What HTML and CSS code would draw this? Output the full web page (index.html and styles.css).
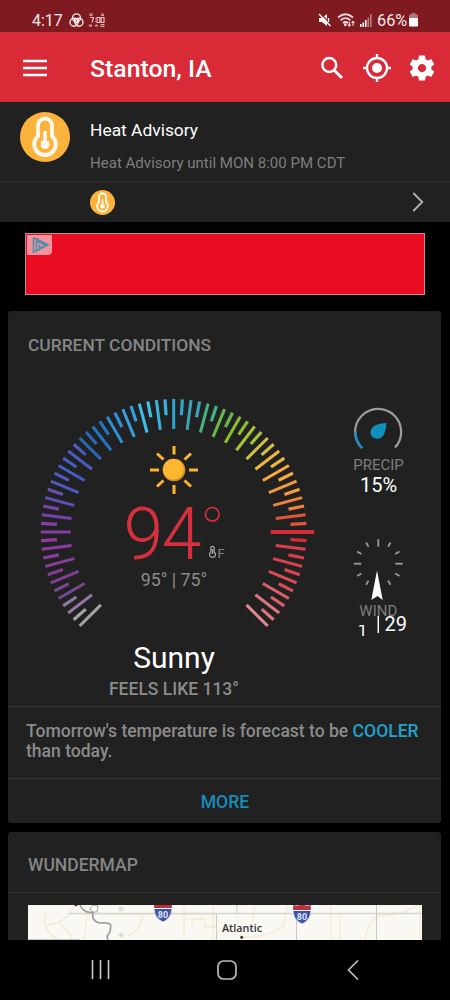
FILE: index.html
```html
<!DOCTYPE html>
<html lang="en">
<head>
<meta charset="utf-8">
<title>Stanton, IA</title>
<link rel="stylesheet" href="styles.css">
</head>
<body>
<div class="status">
  <span class="clock">4:17</span>
  <svg class="rings" width="15" height="15" viewBox="0 0 15 15" fill="none" stroke="#fbe9ea" stroke-width="1.4"><circle cx="7.5" cy="4.9" r="4"/><circle cx="5" cy="9.3" r="4"/><circle cx="10" cy="9.3" r="4"/><circle cx="7.5" cy="7.8" r="2"/></svg>
  <svg class="alarm" width="18" height="15" viewBox="0 0 18 15" fill="none" stroke="#efc9cc" stroke-width="1.1"><path d="M1 1h4M1.500 2.500h3M13 1h3M13 2.500h3" stroke-width=".8"/><path d="M2 4.500h3.500L4 9.500M7 6h.8M7 8.500h.8M9 4.500h2.800v5H9zM13.200 4.500H16v5h-2.800z"/><path d="M1 12h3l-1.500 2zM7 13q1.500-3 3 0zM13 11.500h3v2h-3z" stroke-width=".8"/></svg>
  <span class="grow"></span>
  <svg class="mute" width="14" height="14" viewBox="0 0 14 14"><path d="M1 5h3l5-4v12L4 9H1z" fill="#fff"/><path d="M2 0l12 12" stroke="#801a21" stroke-width="1.200"/><path d="M1 1l11.500 12M10.500 5v4" stroke="#fff" stroke-width="1.300"/></svg>
  <svg class="wifi" width="19" height="15" viewBox="0 0 19 15" fill="none" stroke="#f3d8da" stroke-width="1.700"><path d="M1 4.500Q8.500-2 16 4.500M3.500 7.300Q8.500 3 13.500 7.300M6 10q2.500-2 5 0"/><circle cx="8.300" cy="11.700" r=".6" fill="#fff"/><path d="M12.300 8.500v4.500m-1.500-1.500l1.500 1.700 1.500-1.700M16 13V8.500m-1.500 1.500L16 8.300l1.500 1.700" stroke-width="1.100"/></svg>
  <svg class="signal" width="12" height="13" viewBox="0 0 12 13"><path d="M0 10h1.600v3H0zM2.500 8.500h1.600V13H2.500zM5 6h1.600v7H5z" fill="#fff"/><path d="M7.500 3.500h1.600V13H7.500zM10 0h1.600v13H10z" fill="#b87f83"/></svg>
  <span class="pct">66%</span>
  <svg class="batt" width="9" height="14" viewBox="0 0 9 14"><path d="M2.500 0h4v1.500H8Q9 1.500 9 2.500V6H0V2.500Q0 1.500 1 1.500h1.500z" fill="#b0777b"/><path d="M0 5h9v7.500Q9 13.500 8 13.500H1Q0 13.500 0 12.500z" fill="#fff"/></svg>
</div>
<header class="bar">
  <svg width="24" height="18" viewBox="0 0 24 18"><path d="M0 2h24M0 9h24M0 16h24" stroke="#fff" stroke-width="2.500"/></svg>
  <h1>Stanton, IA</h1>
  <svg class="search" width="24" height="24" viewBox="0 0 24 24" fill="none" stroke="#fff"><circle cx="9.300" cy="9" r="6.900" stroke-width="2.500"/><path d="M14 14l8 8" stroke-width="3"/></svg>
  <svg class="target" width="28" height="28" viewBox="0 0 28 28" fill="none" stroke="#fff" stroke-width="2.300"><circle cx="14" cy="14" r="10"/><path d="M14 0v4M14 24v4M0 14h4M24 14h4"/><circle cx="14" cy="14" r="5" fill="#fff" stroke="none"/></svg>
  <svg class="gear" width="30" height="30" viewBox="0 0 24 24" fill="#fff"><path d="M19.430 12.980c.04-.32.07-.64.07-.98s-.03-.66-.07-.98l2.110-1.650c.19-.15.24-.42.12-.64l-2-3.460c-.12-.22-.39-.3-.61-.22l-2.490 1c-.52-.4-1.080-.73-1.690-.98l-.38-2.650C14.460 2.180 14.250 2 14 2h-4c-.25 0-.46.18-.49.42l-.38 2.650c-.61.25-1.170.59-1.690.98l-2.490-1c-.23-.09-.49 0-.61.22l-2 3.460c-.13.22-.07.49.12.64l2.110 1.650c-.04.32-.07.65-.07.98s.03.66.07.98l-2.110 1.650c-.19.15-.24.42-.12.64l2 3.460c.12.22.39.3.61.22l2.490-1c.52.4 1.080.73 1.690.98l.38 2.650c.03.24.24.42.49.42h4c.25 0 .46-.18.49-.42l.38-2.650c.61-.25 1.170-.59 1.690-.98l2.490 1c.23.09.49 0 .61-.22l2-3.460c.12-.22.07-.49-.12-.64l-2.110-1.650zM12 15.300c-1.820 0-3.300-1.480-3.300-3.300s1.480-3.300 3.300-3.300 3.300 1.480 3.300 3.300-1.480 3.300-3.300 3.300z"/></svg>
</header>
<section class="alert">
  <svg width="50" height="50" viewBox="0 0 50 50"><use href="#heat"/></svg>
  <div><p class="alert-title">Heat Advisory</p><p class="alert-sub">Heat Advisory until MON 8:00 PM CDT</p></div>
</section>
<section class="alert-more">
  <svg width="25" height="25" viewBox="0 0 50 50"><g id="heat"><circle cx="25" cy="25" r="25" fill="#fdb33b"/><path d="M18 24V13.500a7 7 0 0 1 14 0V24a10.800 10.800 0 1 1-14 0z" fill="none" stroke="#fff8ee" stroke-width="3.800"/><path d="M25 19v13" stroke="#fff8ee" stroke-width="3.600"/><circle cx="25" cy="32.500" r="4.500" fill="#fff8ee"/></g></svg>
  <svg width="12" height="20" viewBox="0 0 12 20"><path d="M1.300 1l9 9-9 9" fill="none" stroke="#b2b2b2" stroke-width="1.800"/></svg>
</section>
<div class="ad"><svg width="25" height="20" viewBox="0 0 25 20"><path d="M0 0h25v16q0 4-4 4H0z" fill="#f592a0"/><path d="M6.500 2.500v14.500l3-1.300V6l9.500 4-6.500 3.200V9M6.500 2.500L21 9.800l-11.500 6" fill="none" stroke="#4c8eab" stroke-width="1.600"/></svg></div>
<section class="card">
  <h2>CURRENT CONDITIONS</h2>
  <svg class="cond" width="433" height="337" viewBox="8 369 433 337">
    <g id="ticks"></g>
    <g stroke="#fcb52f" stroke-width="3"><path d="M174 446v8.500M174 485v9M150 470h9M189 470h9M157 453.500l6.500 6M184.500 480.500l6.500 6M157 486.500l6.500-6M184.500 459.500l6.500-6"/></g>
    <circle cx="174" cy="470" r="11.300" fill="#d98f24"/><circle cx="173.300" cy="469.300" r="10.500" fill="#fdb62f"/>
    <text class="temp" x="123.500" y="559.300">94</text>
    <circle cx="212.300" cy="514.300" r="6.800" fill="none" stroke="#d6303e" stroke-width="1.700"/>
    <path d="M210.800 552v-4a1.700 1.700 0 0 1 3.400 0v4a3 3 0 1 1-3.400 0z" fill="none" stroke="#aaa" stroke-width="1.200"/><path d="M212.500 549v5" stroke="#aaa" stroke-width="1.400"/>
    <text class="unit" x="217.500" y="557.500">F</text>
    <text class="hilo" x="174" y="585.600">95° | 75°</text>
    <text class="sky" x="174" y="668">Sunny</text>
    <text class="feels" x="174" y="694.700">FEELS LIKE 113°</text>
    <g fill="none" stroke-width="2.300"><path d="M361.800 448A23 23 0 1 1 395 447.500" stroke="#9b9b9b"/><path d="M355.500 431.500A23 23 0 0 0 362.300 448" stroke="#118fbd"/></g>
    <path d="M386.600 423c-7 .5-12.500 1.500-15 5.500-3 5 .5 10 5.500 10.300 7 0 8.500-7.500 9.500-15.800z" fill="#1190c0"/>
    <text class="label" x="378.500" y="470">PRECIP</text>
    <text class="value" x="378.500" y="492">15%</text>
    <g id="compass"></g>
    <path d="M377 570.500l5.700 29.500-5.200-4-6.200 4z" fill="#fff"/>
    <text class="label" x="378.300" y="616.300">WIND</text>
    <clipPath id="clip"><path d="M350 625h25v15h-25z"/></clipPath>
    <text class="value small" x="362.500" y="636" clip-path="url(#clip)">1</text>
    <path d="M378.300 616v17" stroke="#fff" stroke-width="1.500"/>
    <text class="value" x="395.700" y="631">29</text>
  </svg>
  <p class="forecast">Tomorrow's temperature is forecast to be <b>COOLER</b> than today.</p>
  <div class="more">MORE</div>
</section>
<section class="card map-card">
  <h2>WUNDERMAP</h2>
  <svg class="map" width="394" height="35" viewBox="28 905 394 35">
    <path d="M28 905h394v35H28z" fill="#faf8f3"/>
    <g fill="none" stroke="#f4e9d3" stroke-width="1.300"><path d="M85 905v9h129M87 914l-3 26M75 905q-8 18-29 20M46 912q-7 16 13 28M58 922q10 8 15 18M143 914q-1 14-15 22M184 905v35M192 926v-7h13v8h12M213 905v35M255 905q-4 18-1 18M244 937q20 2 40-11l3-21M331 905v35M340 913v27M365 940q3-20 14-25 20 2 38-10M420 905v35"/></g>
    <g fill="none" stroke="#c9c9c8"><path d="M68 913.500h354" stroke="#d7d6cf" stroke-width="1.700"/><path d="M237 905v8M236.500 913v1M216.500 914v26M296.500 916v24M376.500 905v35M28 939.500h52"/></g>
    <path d="M80 905q4 9 13 7l3-7m-3 7q-2 9 7 11c11-1 13 1 9 11q-3 1-1 6" fill="none" stroke="#9c9ea3" stroke-width="1.700"/>
    <path d="M93 912l-3-3 3-4 5 1-1 6z" fill="#faf8f3" stroke="#a9abb0"/><path d="M74 905h4l-2 1.500z" fill="#333"/>
    <g fill="#e1dfda"><circle cx="121" cy="909" r="2.500"/><circle cx="121" cy="935" r="2.500"/></g>
    <g id="shield"><path d="M154.500 903q4 2 8.500-1 4.500 3 8.500 1 2.500 14-8.500 19-11-5-8.500-19z" fill="#3d52a4" stroke="#fff" stroke-width=".6"/><path d="M154.500 903q4 2 8.500-1 4.500 3 8.500 1l.4 5h-17.800z" fill="#bd3041"/><path d="M154 908.500h18" stroke="#fff"/><text class="route" x="163" y="918.300">80</text></g>
    <use href="#shield" x="139" y="2"/>
    <text class="town" x="242" y="932">Atlantic</text><circle cx="241.700" cy="937.300" r="1.500" fill="#333"/>
  </svg>
</section>
<nav class="nav">
  <svg width="20" height="20" viewBox="0 0 20 20"><path d="M1.500 0v19M9.500 0v19M17.500 0v19" stroke="#bdbdbd" stroke-width="1.700"/></svg>
  <svg class="home" width="20" height="20" viewBox="0 0 20 20"><rect x="1" y="1" width="18" height="18" rx="5.500" fill="none" stroke="#bdbdbd" stroke-width="1.700"/></svg>
  <svg width="12" height="20" viewBox="0 0 12 20"><path d="M11 .5L1.500 10l9.500 9.500" fill="none" stroke="#bdbdbd" stroke-width="1.700"/></svg>
</nav>
<script src="gauge.js"></script>
</body>
</html>
```

FILE: styles.css
```css
* { box-sizing: border-box; }
body { margin: 0; width: 450px; height: 1000px; overflow: hidden; background: #000; color: #fff; font-family: Roboto, "Liberation Sans", sans-serif; display: flex; flex-direction: column; }
svg { display: block; flex: none; }
h1, h2, p { margin: 0; }
.status { height: 32px; flex: none; background: #801a21; display: flex; align-items: center; padding: 8px 32px 0; color: #fbe9ea; font-size: 16px; }
.clock { width: 37px; }
.alarm { margin-left: 4px; }
.grow { flex: 1; }
.wifi { margin-left: 5px; }
.signal { margin: 0 5px 0 4px; }
.pct { width: 32px; font-size: 16.3px; }
.bar { height: 70px; flex: none; background: #d82a37; display: flex; align-items: center; padding: 1px 12px 0 23px; }
h1 { margin: 2px 0 0 43px; width: 230px; flex: none; font-size: 24.8px; font-weight: 500; }
.target { margin-left: 19px; }
.gear { margin-left: 16px; }
.alert { height: 80px; flex: none; background: #212121; border-bottom: 1px solid #303030; display: flex; gap: 20px; padding: 10px 20px 0; }
.alert-title { font-size: 17.4px; line-height: 20px; margin-top: 8px; }
.alert-sub { font-size: 15.05px; line-height: 18px; margin-top: 14px; color: #7e7e7e; }
.alert-more { height: 40px; flex: none; background: #212121; display: flex; justify-content: space-between; align-items: center; padding: 0 26px 0 90px; }
.ad { width: 400px; height: 62px; flex: none; margin: 11px 25px 16px; border: 1px solid #b78f94; background: #ea0c20; padding: 1px; }
.card { width: 433px; height: 512px; flex: none; margin-left: 8px; background: #212121; border-radius: 3px; }
h2 { font-size: 17.4px; line-height: 20px; font-weight: 500; color: #858585; padding: 24px 20px 14px; }
.cond { overflow: visible; }
text { font-family: Roboto, sans-serif; text-anchor: middle; }
.temp { font-size: 71.5px; font-weight: 300; fill: #d6303e; text-anchor: start; letter-spacing: -1.3px; }
.unit { font-size: 13px; fill: #858585; text-anchor: start; }
.hilo { font-size: 17.8px; fill: #8b8b8b; }
.sky { font-size: 30px; fill: #fff; }
.feels { font-size: 17.5px; font-weight: 500; fill: #8b8b8b; }
.label { font-size: 15px; fill: #7d7d7d; }
.value { font-size: 20px; fill: #fff; }
.small { font-size: 17px; }
.forecast { height: 73px; border-top: 1px solid #383838; border-bottom: 1px solid #383838; padding: 14px 17px 0 18px; font-size: 17.54px; line-height: 20px; font-weight: 500; color: #8b8b8b; }
.forecast b { font-weight: 500; color: #22a1cc; }
.more { height: 44px; line-height: 47px; padding-left: 1px; text-align: center; font-size: 17.6px; font-weight: 500; color: #168db8; }
.map-card { height: 108px; margin-top: 9px; border-radius: 3px 3px 0 0; }
.map-card h2 { height: 61px; padding-top: 23px; border-bottom: 1px solid #303030; font-size: 17.5px; }
.map { margin: 12px 0 0 20px; }
.route { font-size: 9px; font-weight: 700; fill: #dfe4fa; }
.town { font-family: "Open Sans", sans-serif; font-size: 10.8px; font-weight: 600; fill: #333; }
.nav { height: 60px; flex: none; display: flex; align-items: center; padding: 0 91px; }
.home { margin: 0 110px 0 106px; }
```

FILE: gauge.js
```js
const NS = "http://www.w3.org/2000/svg";
function tick(parent, cx, cy, angle, inner, outer, color, width) {
  const a = angle * Math.PI / 180;
  const line = document.createElementNS(NS, "line");
  line.setAttribute("x1", cx + inner * Math.cos(a));
  line.setAttribute("y1", cy + inner * Math.sin(a));
  line.setAttribute("x2", cx + outer * Math.cos(a));
  line.setAttribute("y2", cy + outer * Math.sin(a));
  line.setAttribute("stroke", color);
  line.setAttribute("stroke-width", width);
  parent.append(line);
}
// One color per long tick, clockwise from the lower left
const colors = ["#a5a3a7","#8e77a0","#74498f","#803f95","#86409b","#8e3ca3","#823fa6","#7444ac","#6250b8","#4e59c2","#405fc5","#4a5cc0","#2b69b8","#2175c2","#2d8fd5","#369ddc","#42bcec","#38b4df","#2ea5d0","#38a4b5","#46b083","#67b94e","#89bf2e","#a5c438","#cfc145","#edb63f","#f8ab3d","#f49942","#ef823d","#e25538","#d82b3a","#d93e4b","#da4450","#db4b58","#da616b","#da747f","#df8a92"];
const ticks = document.getElementById("ticks");
for (let i = 0; i <= 72; i++) {
  const a = 135 + i * 3.75;
  const c = colors[Math.floor(i / 2)];
  if (i === 60) tick(ticks, 173.7, 532, a, 97, 140.5, "#d82b3a", 4);
  else tick(ticks, 173.7, 532, a, i % 2 ? 117 : 103, 133, c, i % 2 ? 3.2 : 3);
}
const compass = document.getElementById("compass");
for (let i = 0; i < 12; i++) {
  if (i === 3) continue;
  tick(compass, 378.3, 563.7, i * 30, i % 3 ? 19.5 : 17, 24.5, "#999", 1.8);
}
```
